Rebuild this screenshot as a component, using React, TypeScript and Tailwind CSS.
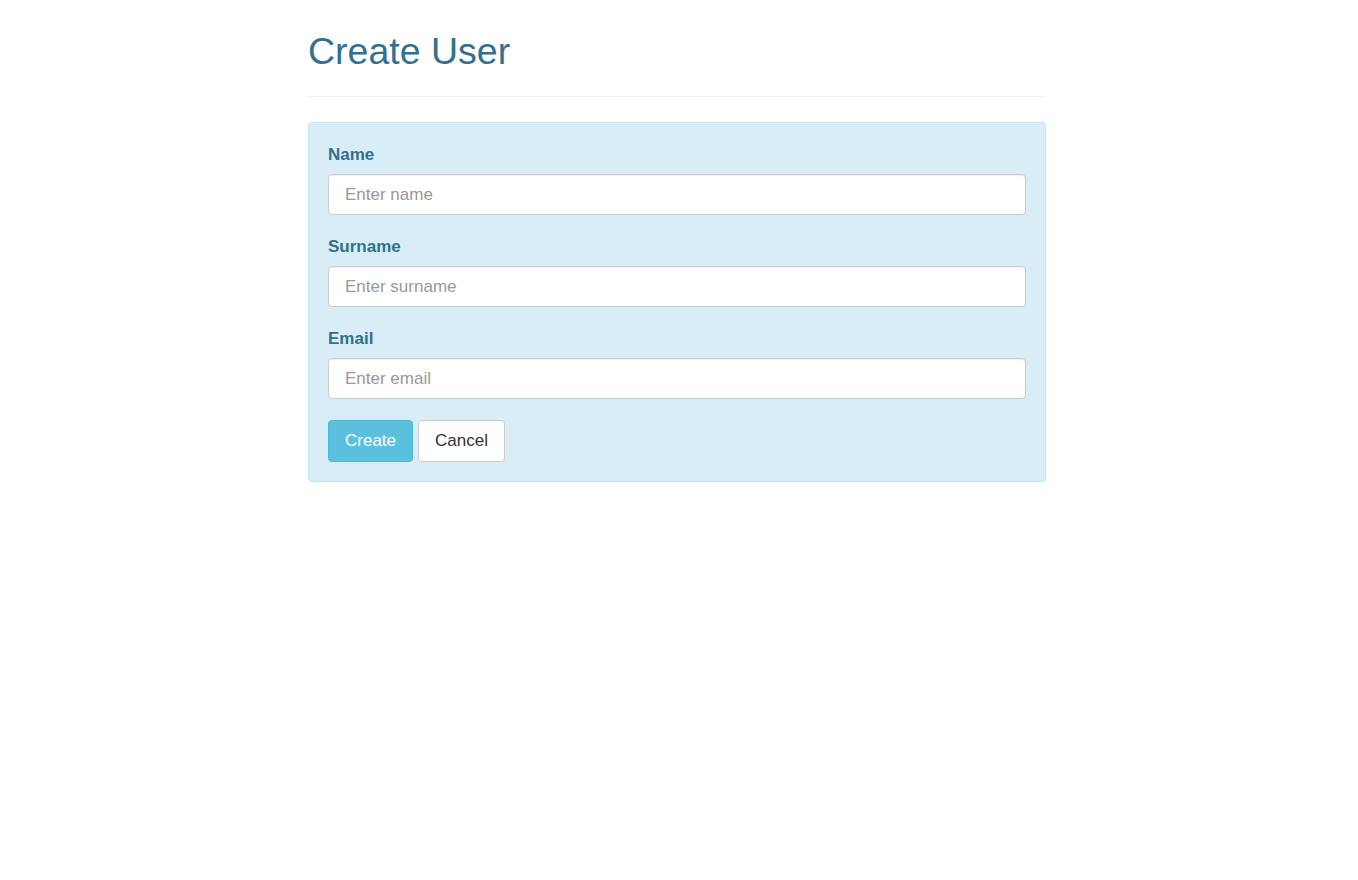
import React from "react";

const font = { fontFamily: '"Liberation Sans", Arial, Helvetica, sans-serif' };

function Field({ label, placeholder, last }: { label: string; placeholder: string; last?: boolean }) {
  return (
    <div className={last ? "flex flex-col mb-[21px]" : "flex flex-col mb-[20px]"}>
      <label className="text-[17px] leading-[24px] font-bold text-[#31708f] mb-[7px]">{label}</label>
      <input
        type="text"
        placeholder={placeholder}
        className="h-[41px] w-full rounded-[4px] border border-[#ccc] bg-white px-4 text-[17px] text-[#555] placeholder:text-[#999] shadow-[inset_0_1px_1px_rgba(0,0,0,0.075)] outline-none"
      />
    </div>
  );
}

export default function App() {
  return (
    <div className="min-h-[880px] bg-white" style={font}>
      <div className="ml-[308px] w-[738px]">
        <div className="pt-[31px] pb-[25px] border-b border-[#eee]">
          <h1 className="text-[37.5px] leading-[40px] font-normal text-[#31708f]">Create User</h1>
        </div>
        <div className="mt-[25px] rounded-[4px] border border-[#bce8f1] bg-[#d9edf7] px-[19px] pt-5 pb-[19px]">
          <Field label="Name" placeholder="Enter name" />
          <Field label="Surname" placeholder="Enter surname" />
          <Field label="Email" placeholder="Enter email" last />
          <div className="flex gap-[5px]">
            <button className="h-[42px] rounded-[4px] border border-[#46b8da] bg-[#5bc0de] px-4 text-[17px] text-white">
              Create
            </button>
            <button className="h-[42px] rounded-[4px] border border-[#ccc] bg-white px-4 text-[17px] text-[#333]">
              Cancel
            </button>
          </div>
        </div>
      </div>
    </div>
  );
}
